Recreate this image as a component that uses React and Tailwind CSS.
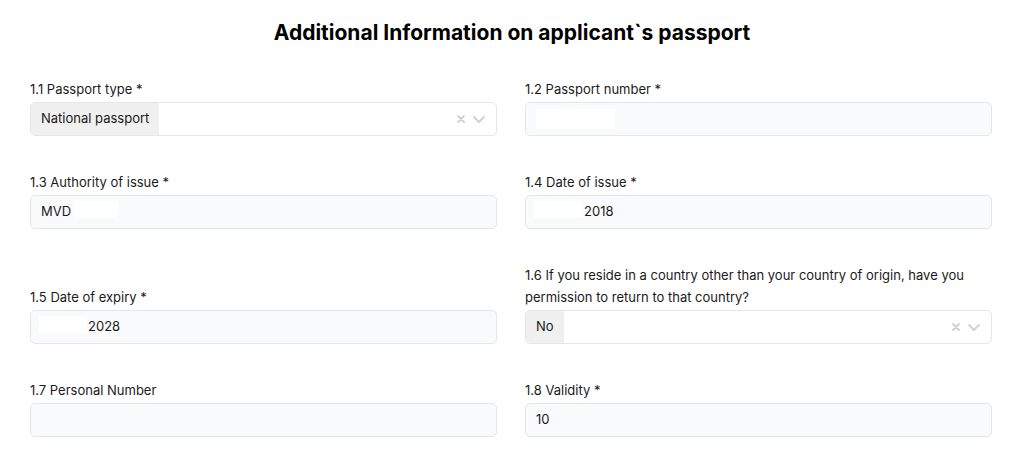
import React from "react";

const font = { fontFamily: "Inter, 'Noto Sans', sans-serif" };

const Redact = ({ w }) => (
  <span className={`inline-block h-[17px] bg-white ${w}`} />
);

const TextInput = ({ children }) => (
  <div className="flex h-[34px] items-center rounded-[5px] border border-[#e3e6ea] bg-[#f9fafb] pl-[10px] text-[13px] text-[#1a1a1a]">
    {children}
  </div>
);

const SelectInput = ({ value }) => (
  <div className="flex h-[34px] items-stretch overflow-hidden rounded-[5px] border border-[#e3e6ea] bg-white text-[13px] text-[#1a1a1a]">
    <span className="flex items-center rounded-l-[4px] bg-[#f0f0f0] px-[10px]">{value}</span>
    <span className="flex-1" />
    <span className="flex items-center gap-[6px] pr-[10px] text-[#cfcfcf]">
      <svg width="10" height="10" viewBox="0 0 10 10" fill="none" stroke="currentColor" strokeWidth="1.8" strokeLinecap="round">
        <path d="M2 2l6 6M8 2l-6 6" />
      </svg>
      <svg width="14" height="10" viewBox="0 0 14 10" fill="none" stroke="currentColor" strokeWidth="1.8" strokeLinecap="round" strokeLinejoin="round">
        <path d="M2 3l5 5 5-5" />
      </svg>
    </span>
  </div>
);

const Field = ({ label, children }) => (
  <div className="flex flex-col justify-end">
    <label className="mb-[2px] text-[13px] leading-[22px] text-[#1a1a1a]">{label}</label>
    {children}
  </div>
);

export default function App() {
  return (
    <div className="min-h-[457px] bg-white" style={font}>
      <h1 className="pt-[19px] pb-[31px] text-center text-[21px] font-bold leading-[28px] text-black">
        Additional Information on applicant`s passport
      </h1>
      <div className="grid grid-cols-2 gap-x-[28px] gap-y-[35px] pl-[30px] pr-[32px]">
        <Field label="1.1 Passport type *">
          <SelectInput value="National passport" />
        </Field>
        <Field label="1.2 Passport number *">
          <TextInput>
            <Redact w="w-[79px] h-[20px]" />
          </TextInput>
        </Field>
        <Field label="1.3 Authority of issue *">
          <TextInput>
            <span>MVD</span>
            <span className="ml-[3px]"><Redact w="w-[44px]" /></span>
          </TextInput>
        </Field>
        <Field label="1.4 Date of issue *">
          <TextInput>
            <span className="-ml-[2px]"><Redact w="w-[49px]" /></span>
            <span className="ml-[1px]">2018</span>
          </TextInput>
        </Field>
        <Field label="1.5 Date of expiry *">
          <TextInput>
            <span className="-ml-[2px]"><Redact w="w-[48px]" /></span>
            <span className="ml-[1px]">2028</span>
          </TextInput>
        </Field>
        <Field label="1.6 If you reside in a country other than your country of origin, have you permission to return to that country?">
          <SelectInput value="No" />
        </Field>
        <Field label="1.7 Personal Number">
          <TextInput />
        </Field>
        <Field label="1.8 Validity *">
          <TextInput>
            <span>10</span>
          </TextInput>
        </Field>
      </div>
    </div>
  );
}
